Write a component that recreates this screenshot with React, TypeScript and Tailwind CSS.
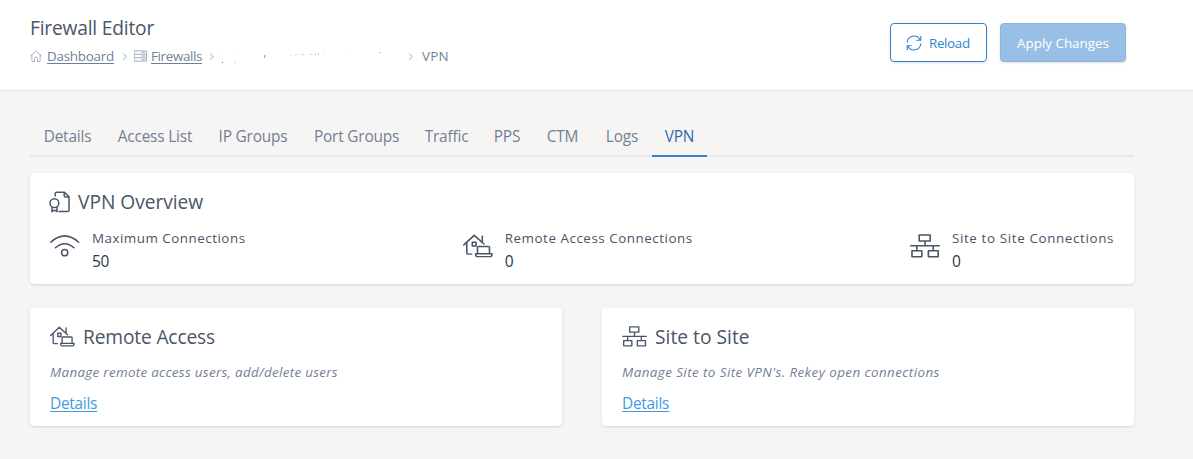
import type { ReactNode } from "react";

const stroke = { fill: "none", stroke: "currentColor", strokeLinecap: "round", strokeLinejoin: "round" } as const;

function HomeIcon() {
  return (
    <svg className="h-3 w-3 shrink-0" viewBox="0 0 24 24" {...stroke} strokeWidth="1.9">
      <path d="M.8 12.6 10.9 2.4a1.5 1.5 0 0 1 2.2 0L23.2 12.6M3.8 10v12.2a1 1 0 0 0 1 1H9v-6a3 3 0 0 1 6 0v6h4.2a1 1 0 0 0 1-1V10" />
    </svg>
  );
}

function FirewallIcon() {
  return (
    <svg className="h-3 w-[13px] shrink-0" viewBox="0 0 13 12" {...stroke}>
      <path d="M.5.9h12v10.2H.5zM.5 4.3h12M.5 7.7h12M8 2.6h2.5M8 6h2.5M8 9.4h2.5" />
    </svg>
  );
}

function Chevron() {
  return (
    <svg className="h-[7px] w-1 shrink-0 text-[#c0cddb]" viewBox="0 0 4 7" {...stroke} strokeWidth="1.2">
      <path d="m.6.8 2.7 2.7L.6 6.2" />
    </svg>
  );
}

function ReloadIcon() {
  return (
    <svg className="h-4 w-4 shrink-0" viewBox="0 0 16 16" {...stroke} strokeWidth="1.1">
      <path d="M1.2 7.2A6.8 6.8 0 0 1 14 4.7M14.8 1.2v4h-4M14.8 8.8A6.8 6.8 0 0 1 2 11.3M1.2 14.8v-4h4" />
    </svg>
  );
}

function CertificateIcon() {
  return (
    <svg className="-ml-px h-[22px] w-[22px] shrink-0" viewBox="0 0 22 22" {...stroke} strokeWidth="1.5">
      <path d="M6.2 5V3A1.8 1.8 0 0 1 8 1.2h7.4l4.6 4.6v13.4a1.4 1.4 0 0 1-1.4 1.4H10M15.2 1.4v3.4a1.2 1.2 0 0 0 1.2 1.2h3.4" />
      <circle cx="5.4" cy="12.2" r="4.4" />
      <path d="M2.9 16v4.7l2.5-1.5 2.6 1.5V16" />
    </svg>
  );
}

function WifiIcon() {
  return (
    <svg className="h-[30px] w-[30px] shrink-0" viewBox="0 0 30 30" {...stroke} strokeWidth="1.5">
      <path d="M.8 11.2q13.9-12.6 27.8 0M5.4 16.8q9.3-8.2 18.6 0" />
      <circle cx="14.7" cy="21.7" r="3.1" />
    </svg>
  );
}

function RemoteIcon({ className }: { className: string }) {
  return (
    <svg className={className} viewBox="0 0 30 26" preserveAspectRatio="none" {...stroke} strokeWidth="1.6">
      <path d="M.8 11.8 11.2 1.5l9.8 9.3M3.8 9.5v11a1.3 1.3 0 0 0 1.3 1.3h3.7M19.3 2.3v6M9.3 9h3.8v4H9.3zM14.5 21v-6.4a1 1 0 0 1 1-1h10a1 1 0 0 1 1 1V21M12.7 21.5h16.2v1.2a1.8 1.8 0 0 1-1.8 1.8H14.5a1.8 1.8 0 0 1-1.8-1.8z" />
    </svg>
  );
}

function NetworkIcon({ className }: { className: string }) {
  return (
    <svg className={className} viewBox="0 0 30 26" preserveAspectRatio="none" {...stroke} strokeWidth="1.6">
      <path d="M9.2 1.2h11v6.5h-11zM15 7.7v5M.8 12.8h28.4M6.8 12.8v5M23.2 12.8v5M2 18.2h9.8v6.4H2zM18.4 18.2h9.8v6.4h-9.8z" />
    </svg>
  );
}

/* Leftover specks of the hidden firewall name. */
function MaskedName() {
  return (
    <svg className="h-5 w-[195px] shrink-0" viewBox="214 46 195 20" shapeRendering="crispEdges">
      <path fill="#5d7092" d="M222 62h1v1h-1z" />
      <path fill="#d5dbe3" d="M234 62h2v1h-2zM291 55h1v1h-1zM295 55h1v1h-1zM302 54h1v1h-1zM309 54h3v1h-3zM324 54h1v1h-1z" />
      <path fill="#eef2f6" d="M232 54h1v2h-1zM305 54h1v1h-1zM350 54h1v1h-1zM222 55h1v2h-1z" />
      <path fill="#7fa3cf" d="M264 55h1v3h-1zM380 52h1v1h-1z" />
      <path fill="#f6e3cd" d="M266 55h1v2h-1zM379 52h1v1h-1z" />
      <path fill="#c5cbd5" d="M297 54h1v1h-1zM302 54h2v1h-2zM315 53h1v2h-1zM318 53h1v2h-1z" />
    </svg>
  );
}

const tabs: [string, string][] = [
  ["Details", "w-[75px]"],
  ["Access List", "w-[100px]"],
  ["IP Groups", "w-[96px]"],
  ["Port Groups", "w-[111px]"],
  ["Traffic", "w-[69px]"],
  ["PPS", "w-[52px]"],
  ["CTM", "w-[59px]"],
  ["Logs", "w-[60px]"],
  ["VPN", "w-[55px]"],
];

function Stat({ icon, label, value, track }: { icon: ReactNode; label: string; value: string; track: string }) {
  return (
    <div className="flex items-center gap-3">
      <div className="mb-2 flex">{icon}</div>
      <div className="text-[#4a5568]">
        <div className={`h-[22px] text-[13.4px] leading-[22px] ${track}`}>{label}</div>
        <div className="h-6 text-[15.5px] leading-6 tracking-[-0.3px] text-[#2d3748]">{value}</div>
      </div>
    </div>
  );
}

function LinkCard({ icon, title, text, titleTrack, textTrack }: { icon: ReactNode; title: string; text: string; titleTrack: string; textTrack: string }) {
  return (
    <section className="h-[118px] w-[532px] rounded bg-white px-5 pt-[14px] shadow">
      <h2 className={`flex h-[30px] items-center gap-2 text-[19.2px] leading-[30px] text-[#4a5568] ${titleTrack}`}>
        {icon}
        {title}
      </h2>
      <p className={`mt-[10px] h-5 text-[13.4px] leading-5 text-[#718096] italic ${textTrack}`}>{text}</p>
      <a className="mt-[10px] block h-6 w-max text-[15.4px] leading-6 tracking-[-0.25px] text-[#4299e1] underline underline-offset-2">Details</a>
    </section>
  );
}

export default function App() {
  return (
    <div className="h-[459px] w-[1193px] overflow-hidden bg-[#f6f5f3] font-['Open_Sans','Noto_Sans',sans-serif] text-[#4a5568]">
      <header className="flex h-[91px] justify-between border-b border-[#e2e8f0] bg-white pr-[67px] pl-[30px]">
        <div className="pt-[13px]">
          <h1 className="h-[30px] w-max text-[19.2px] leading-[30px] tracking-[-0.2px]">Firewall Editor</h1>
          <nav className="mt-[3px] flex h-5 items-center text-[13.4px] leading-5 text-[#718096]">
            <span className="flex w-[93px] items-center gap-[5px]">
              <span className="flex text-[#a0aec0]"><HomeIcon /></span>
              <a className="tracking-[-0.23px] underline underline-offset-2">Dashboard</a>
            </span>
            <Chevron />
            <span className="ml-[7px] flex w-[76px] items-center gap-1">
              <span className="flex text-[#a0aec0]"><FirewallIcon /></span>
              <a className="tracking-[-0.35px] underline underline-offset-2">Firewalls</a>
            </span>
            <Chevron />
            <MaskedName />
            <Chevron />
            <span className="ml-[9px] tracking-[0.2px]">VPN</span>
          </nav>
        </div>
        <div className="flex gap-[13px] pt-[23px]">
          <button className="flex h-[39px] w-[97px] items-center gap-[7px] rounded border border-[#3182ce] pt-px pl-[15px] text-[13.4px] text-[#3182ce] shadow-sm">
            <ReloadIcon />
            <span className="tracking-[-0.35px]">Reload</span>
          </button>
          <button className="h-[39px] w-[126px] rounded border border-[#90b4d9] bg-[#98c0e6] pt-px text-[13.4px] text-white shadow-sm">
            Apply Changes
          </button>
        </div>
      </header>
      <main className="w-[1134px] pl-[30px]">
        <nav className="mt-[26px] flex h-10 w-[1104px] border-b-2 border-[#e2e8f0]">
          {tabs.map(([name, width]) => (
            <a
              key={name}
              className={`flex h-10 shrink-0 items-center justify-center border-b-2 pt-[2px] text-[15.4px] tracking-[-0.18px] ${width} ${name === "VPN" ? "border-[#3182ce] text-[#2b6cb0]" : "border-transparent text-[#718096]"}`}
            >
              {name}
            </a>
          ))}
        </nav>
        <section className="mt-4 h-[111px] w-[1104px] rounded bg-white px-5 pt-[14px] shadow">
          <h2 className="flex h-[30px] items-center gap-[7px] text-[19.2px] leading-[30px] tracking-[-0.04px]">
            <CertificateIcon />
            VPN Overview
          </h2>
          <div className="mt-[10px] flex justify-between">
            <Stat icon={<WifiIcon />} label="Maximum Connections" value="50" track="tracking-[0.5px]" />
            <Stat icon={<RemoteIcon className="h-6 w-[30px] shrink-0" />} label="Remote Access Connections" value="0" track="tracking-[0.53px]" />
            <Stat icon={<NetworkIcon className="h-6 w-[30px] shrink-0" />} label="Site to Site Connections" value="0" track="tracking-[0.63px]" />
          </div>
        </section>
        <div className="mt-6 flex gap-10">
          <LinkCard icon={<RemoteIcon className="mb-px h-[21px] w-[25px] shrink-0" />} title="Remote Access" text="Manage remote access users, add/delete users" titleTrack="tracking-[-0.16px]" textTrack="tracking-[0.31px]" />
          <LinkCard icon={<NetworkIcon className="mb-px h-[21px] w-[25px] shrink-0" />} title="Site to Site" text="Manage Site to Site VPN's. Rekey open connections" titleTrack="tracking-[0.02px]" textTrack="tracking-[0.43px]" />
        </div>
      </main>
    </div>
  );
}
